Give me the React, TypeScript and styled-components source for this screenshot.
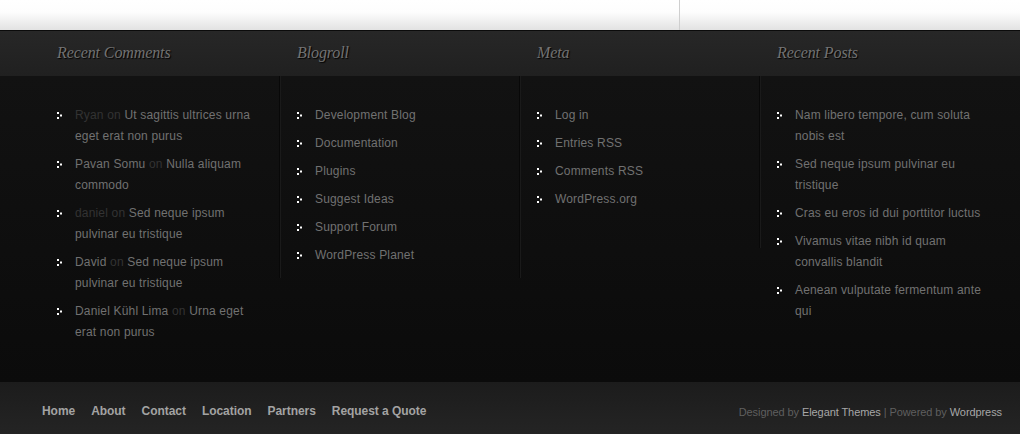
import React from "react";
import styled, { createGlobalStyle } from "styled-components";

const Global = createGlobalStyle`
  html, body { margin: 0; padding: 0; background: #0f0f0f; }
  body { font-family: "Liberation Sans", Arial, sans-serif; width: 1020px; height: 434px; overflow: hidden; }
  ul { margin: 0; padding: 0; list-style: none; }
  a { text-decoration: none; }
`;

const Page = styled.div`
  width: 1020px;
  height: 434px;
  display: flex;
  flex-direction: column;
`;

const TopStrip = styled.div`
  height: 30px;
  display: flex;
  background: linear-gradient(to bottom, #ffffff 0%, #fdfdfd 40%, #e2e2e2 100%);
`;

const TopMain = styled.div`
  width: 679px;
  border-right: 1px solid #cfcfcf;
`;

const HeadBand = styled.div`
  height: 45px;
  border-top: 1px solid #0b0b0b;
  background: linear-gradient(to bottom, #272727, #202020);
  display: grid;
  grid-template-columns: repeat(4, 240px);
  padding-left: 41px;
`;

const Heading = styled.h3`
  margin: 0;
  padding: 13px 0 0 16px;
  font-family: "Liberation Serif", "DejaVu Serif", serif;
  font-style: italic;
  font-weight: normal;
  font-size: 16px;
  letter-spacing: -0.1px;
  color: #727272;
  text-shadow: 1px 1px 1px #000;
`;

const Body = styled.div`
  height: 306px;
  background: linear-gradient(to bottom, #121212, #0b0b0b);
  display: grid;
  grid-template-columns: repeat(4, 240px);
  padding-left: 41px;
`;

const Column = styled.div`
  display: flex;
`;

const Divider = styled.div<{ $h: number }>`
  width: 1px;
  height: ${(p) => p.$h}px;
  background: #080808;
  border-right: 1px solid #1a1a1a;
  flex: none;
  margin-left: -2px;
`;

const List = styled.ul`
  padding: 29px 16px 0 16px !important;
`;

const Item = styled.li`
  display: flex;
  align-items: flex-start;
  font-size: 12px;
  line-height: 21px;
  letter-spacing: 0.17px;
  margin-bottom: 7px;
  color: #717171;
`;

const Bullet = styled.svg`
  flex: none;
  width: 5px;
  height: 7px;
  margin: 7px 13px 0 0;
`;

const Link = styled.a`
  color: #717171;
`;

const Dim = styled.span`
  color: #333333;
`;

const Author = styled.span<{ $dim?: boolean }>`
  color: ${(p) => (p.$dim ? "#333333" : "#717171")};
`;

const BottomBar = styled.div`
  height: 52px;
  box-sizing: border-box;
  padding: 5px 18px 0 42px;
  background: linear-gradient(to bottom, #1c1c1c, #242424);
  display: flex;
  align-items: center;
  justify-content: space-between;
`;

const Nav = styled.nav`
  display: flex;
  gap: 16px;
`;

const NavLink = styled.a`
  font-size: 12px;
  font-weight: bold;
  letter-spacing: -0.05px;
  color: #a3a3a3;
`;

const Credits = styled.div`
  font-size: 11px;
  letter-spacing: -0.08px;
  color: #5f5f5f;
  padding-top: 3px;
`;

const CreditLink = styled.a`
  color: #a7a7a7;
`;

const Dots = () => (
  <Bullet viewBox="0 0 5 7">
    <rect x="0" y="0" width="2" height="2" fill="#ffffff" />
    <rect x="3" y="2.5" width="2" height="2" fill="#ffffff" />
    <rect x="0" y="5" width="2" height="2" fill="#ffffff" />
  </Bullet>
);

const comments = [
  { name: "Ryan", dim: true, post: "Ut sagittis ultrices urna eget erat non purus" },
  { name: "Pavan Somu", dim: false, post: "Nulla aliquam commodo" },
  { name: "daniel", dim: true, post: "Sed neque ipsum pulvinar eu tristique" },
  { name: "David", dim: false, post: "Sed neque ipsum pulvinar eu tristique" },
  { name: "Daniel Kühl Lima", dim: false, post: "Urna eget erat non purus" },
];

const blogroll = ["Development Blog", "Documentation", "Plugins", "Suggest Ideas", "Support Forum", "WordPress Planet"];
const meta = ["Log in", "Entries RSS", "Comments RSS", "WordPress.org"];
const posts = [
  "Nam libero tempore, cum soluta nobis est",
  "Sed neque ipsum pulvinar eu tristique",
  "Cras eu eros id dui porttitor luctus",
  "Vivamus vitae nibh id quam convallis blandit",
  "Aenean vulputate fermentum ante qui",
];

const SimpleList = ({ items }: { items: string[] }) => (
  <List>
    {items.map((t) => (
      <Item key={t}>
        <Dots />
        <Link href="#">{t}</Link>
      </Item>
    ))}
  </List>
);

export default function App() {
  return (
    <Page>
      <Global />
      <TopStrip>
        <TopMain />
      </TopStrip>
      <HeadBand>
        <Heading>Recent Comments</Heading>
        <Heading>Blogroll</Heading>
        <Heading>Meta</Heading>
        <Heading>Recent Posts</Heading>
      </HeadBand>
      <Body>
        <Column>
          <List>
            {comments.map((c, i) => (
              <Item key={i}>
                <Dots />
                <span>
                  <Author $dim={c.dim}>{c.name}</Author> <Dim>on</Dim> <Link href="#">{c.post}</Link>
                </span>
              </Item>
            ))}
          </List>
        </Column>
        <Column>
          <Divider $h={202} />
          <SimpleList items={blogroll} />
        </Column>
        <Column>
          <Divider $h={202} />
          <SimpleList items={meta} />
        </Column>
        <Column>
          <Divider $h={172} />
          <SimpleList items={posts} />
        </Column>
      </Body>
      <BottomBar>
        <Nav>
          {["Home", "About", "Contact", "Location", "Partners", "Request a Quote"].map((n) => (
            <NavLink key={n} href="#">{n}</NavLink>
          ))}
        </Nav>
        <Credits>
          Designed by <CreditLink href="#">Elegant Themes</CreditLink> | Powered by <CreditLink href="#">Wordpress</CreditLink>
        </Credits>
      </BottomBar>
    </Page>
  );
}
